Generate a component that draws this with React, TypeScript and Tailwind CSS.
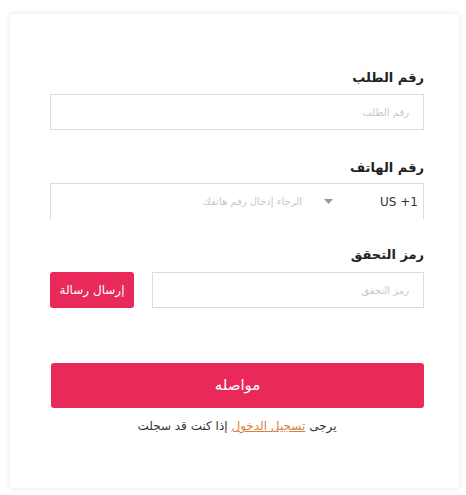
import React from "react";

export default function App() {
  const font = { fontFamily: '"DejaVu Sans", "Noto Sans", sans-serif' };
  return (
    <div className="w-[466px] h-[495px] bg-white pt-[14px] pl-[10px]" style={font}>
      <div dir="rtl" className="w-[449px] h-[474px] bg-white shadow-[0_0_6px_rgba(0,0,0,0.10)] pt-[54px] pr-[35px] pl-[40px] flex flex-col">
        <label className="text-[13px] leading-[20px] font-semibold text-[#222]">رقم الطلب</label>
        <div className="mt-[6px] h-[36px] border border-[#ddd] flex items-center px-[14px] text-[10px] text-[#c8c8c8]">رقم الطلب</div>

        <label className="mt-[28px] text-[13px] leading-[20px] font-semibold text-[#222]">رقم الهاتف</label>
        <div className="mt-[5px] h-[36px] border-t border-x border-[#ddd] flex items-center pr-[9px] text-[10px]">
          <span dir="ltr" className="text-[12px] text-[#333] w-[34px] text-right whitespace-nowrap">US +1</span>
          <span className="w-[56px] flex justify-end">
            <svg width="9" height="6" viewBox="0 0 9 6"><path d="M0 0h9L4.5 5z" fill="#999" /></svg>
          </span>
          <span className="mr-[22px] text-[#c8c8c8] whitespace-nowrap">الرجاء إدخال رقم هاتفك</span>
        </div>

        <label className="mt-[26px] text-[13px] leading-[20px] font-semibold text-[#222]">رمز التحقق</label>
        <div className="mt-[7px] flex gap-[18px]">
          <div className="flex-1 h-[36px] border border-[#ddd] flex items-center px-[14px] text-[10px] text-[#c8c8c8]">رمز التحقق</div>
          <button className="w-[84px] h-[36px] rounded-[3px] bg-[#e8295a] text-white text-[12px]">إرسال رسالة</button>
        </div>

        <button className="mt-[55px] h-[45px] ml-[1px] rounded-[3px] bg-[#e8295a] text-white text-[15px]">مواصله</button>
        <p className="mt-[8px] text-center text-[12px] leading-[20px] text-[#333]">
          يرجى <a className="text-[#d9823f] underline">تسجيل الدخول</a> إذا كنت قد سجلت
        </p>
      </div>
    </div>
  );
}
